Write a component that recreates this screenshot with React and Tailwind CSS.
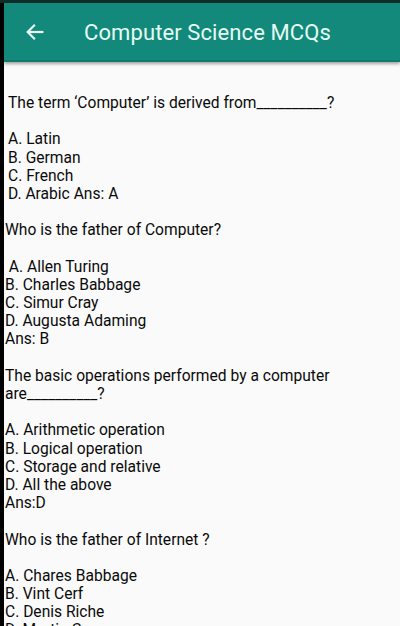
import React from "react";

const blocks = [
  {
    pad: "pl-[4px]",
    lines: [
      "The term \u2018Computer\u2019 is derived from__________?",
      "",
      "A. Latin",
      "B. German",
      "C. French",
      "D. Arabic Ans: A",
      "",
    ],
  },
  {
    pad: "pl-[1px]",
    lines: [
      "Who is the father of Computer?",
      "",
      " A. Allen Turing",
      "B. Charles Babbage",
      "C. Simur Cray",
      "D. Augusta Adaming",
      "Ans: B",
      "",
    ],
  },
  {
    pad: "pl-[1px]",
    lines: [
      "The basic operations performed by a computer",
      "are__________?",
      "",
      "A. Arithmetic operation",
      "B. Logical operation",
      "C. Storage and relative",
      "D. All the above",
      "Ans:D",
      "",
    ],
  },
  {
    pad: "pl-[1px]",
    lines: [
      "Who is the father of Internet ?",
      "",
      "A. Chares Babbage",
      "B. Vint Cerf",
      "C. Denis Riche",
      "D. Martin Cooper",
    ],
  },
];

export default function App() {
  return (
    <div className="w-[400px] h-[626px] overflow-hidden bg-black flex flex-col font-['Roboto',sans-serif]">
      <div className="h-[3px] bg-[#0b2e28] shrink-0" />
      <div className="flex flex-1 min-h-0">
        <div className="w-[4px] shrink-0 bg-black" />
        <div className="flex-1 flex flex-col bg-[#fafafa] min-h-0">
          <header className="h-[59px] shrink-0 bg-[#12897a] flex items-center shadow-[0_2px_3px_rgba(0,0,0,0.35)] border-b-[2px] border-[#0f7a6c] relative z-10">
            <svg className="ml-[20px]" width="22" height="22" viewBox="0 0 24 24" fill="none" stroke="#e6fbf4" strokeWidth="2.4" strokeLinecap="square">
              <path d="M20 12H5" />
              <path d="M11 5l-7 7 7 7" />
            </svg>
            <h1 className="ml-[38px] mt-[2px] text-[22px] text-[#e6fbf4] font-normal tracking-[0.1px]">Computer Science MCQs</h1>
          </header>
          <div className="pt-[32px] text-[15.6px] leading-[18.2px] text-[#0a0a0a] whitespace-pre">
            {blocks.map((b, i) => (
              <div key={i} className={b.pad}>
                {b.lines.map((l, j) => (
                  <div key={j} className="h-[18.2px]">{l}</div>
                ))}
              </div>
            ))}
          </div>
        </div>
      </div>
    </div>
  );
}
